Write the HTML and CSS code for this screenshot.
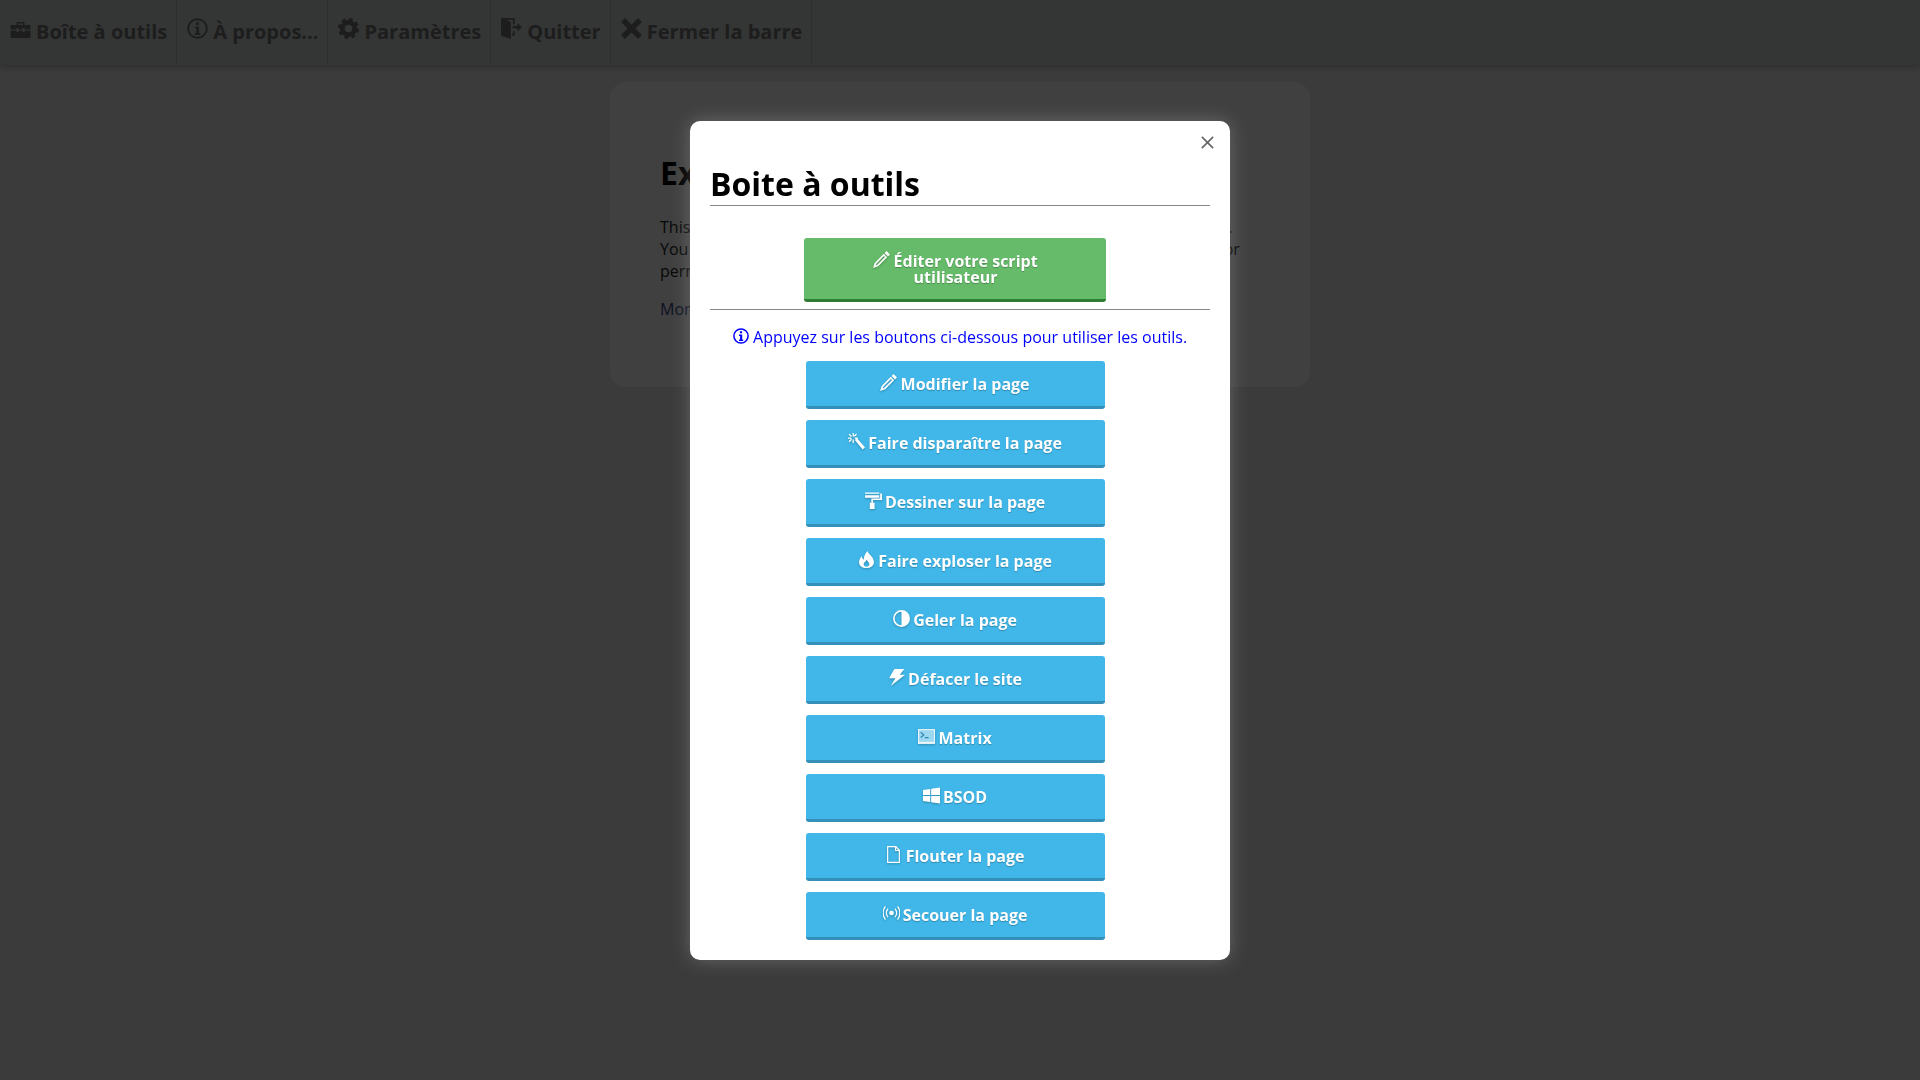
FILE: index.html
```html
<!DOCTYPE html>
<html lang="fr">
<head>
<meta charset="utf-8">
<title>Boite à outils</title>
<link rel="stylesheet" href="styles.css">
</head>
<body>
<svg class="defs" aria-hidden="true">
  <symbol id="i-case" viewBox="0 0 20 16"><path d="M6 3V1.200C6 .5 6.500 0 7.200 0h5.600C13.500 0 14 .5 14 1.200V3h-1.400V1.400H7.400V3zM1 3h18c.6 0 1 .4 1 1v3.500h-6V6h-2v1.500H8V6H6v1.500H0V4c0-.6.4-1 1-1zM0 8.600h6V10h2V8.600h4V10h2V8.600h6V15c0 .6-.4 1-1 1H1c-.6 0-1-.4-1-1z" fill="currentColor"/></symbol>
  <symbol id="i-info" viewBox="0 0 16 16"><circle cx="8" cy="8" r="7.100" fill="none" stroke="currentColor" stroke-width="1.500"/><path d="M6.900 3.200h2.200v2.100H6.900zM6 6.500h3.200v5h1v1.400H6v-1.400h1.100V7.900H6z" fill="currentColor"/></symbol>
  <symbol id="i-cog" viewBox="0 0 16 16"><circle cx="8" cy="8" r="4.700" fill="none" stroke="currentColor" stroke-width="3.600"/><circle cx="8" cy="8" r="6.900" fill="none" stroke="currentColor" stroke-width="2.200" stroke-dasharray="3 2.420"/></symbol>
  <symbol id="i-door" viewBox="0 0 16 16"><path d="M0 0h10.500v5H9.100V1.400H4.500L7.500 3v13L0 13.500zM9.100 10h1.400v3.500H8.500v-1.300h.6zM8.800 6h3.700V3.800L16 7l-3.500 3.200V8H8.800z" fill="currentColor"/></symbol>
  <symbol id="i-x" viewBox="0 0 16 16"><path d="M3 0l5 5 5-5 3 3-5 5 5 5-3 3-5-5-5 5-3-3 5-5-5-5z" fill="currentColor"/></symbol>
  <symbol id="i-pencil" viewBox="0 0 16 16"><path fill-rule="evenodd" d="M12.800 0L16 3.200l-1.900 1.900-3.200-3.200zM10.100 2.700l3.200 3.200L4.800 14.400 0 16l1.600-4.800zM3.300 11.700L2.200 13.800l2.100-1.100 7-7-1-1z" fill="currentColor"/></symbol>
  <symbol id="i-wand" viewBox="0 0 16 16"><path d="M6.500 6.500l1.700-1.700L16 13.300 13.800 15.500zM4.300 0h1.200v3.300H4.300zM4.300 6h1.200v3.500H4.300zM0 4.200h3.300v1.200H0zM6.300 4.200h3v1.200h-3zM.6 1.500l.9-.9 2.200 2.200-.9.9zM7.600.5l.9.9-2.200 2.200-.9-.9zM.6 7.700l2.200-2.200.9.9-2.200 2.200z" fill="currentColor"/></symbol>
  <symbol id="i-roller" viewBox="0 0 16 16"><path d="M0 .5h13.500v1.200H0zM0 3h13.500v2.500H0zM14.300 1.500H16v6H7.500V10H9v6H4.500v-6H6V6h8.300z" fill="currentColor"/></symbol>
  <symbol id="i-fire" viewBox="0 0 16 16"><path fill-rule="evenodd" d="M9 0c.5 3 6 5.500 6 10.300C15 13.800 12 16 8 16s-7-2.200-7-5.500c0-2.500 1.300-4.300 2.800-5.500 0 1.500.4 2.600 1.600 3.300C5.500 5.500 6.500 2.500 9 0zM8 14.900c1.500 0 2.700-1 2.700-2.400 0-1.800-1.700-2.600-2.500-4.200-.8 1.700-2.900 2.400-2.900 4.200 0 1.400 1.200 2.400 2.700 2.400z" fill="currentColor"/></symbol>
  <symbol id="i-half" viewBox="0 0 16 16"><circle cx="8" cy="8" r="7.200" fill="none" stroke="currentColor" stroke-width="1.500"/><path d="M8 1a7 7 0 0 1 0 14z" fill="currentColor"/></symbol>
  <symbol id="i-flash" viewBox="0 0 16 16"><path d="M6 0h9.500L11 5.500h5L2.500 16 7 8.700H1z" fill="currentColor"/></symbol>
  <symbol id="i-term" viewBox="0 0 16 16"><rect x="0" y="1" width="16" height="14" fill="currentColor" opacity=".9"/><rect x="1" y="2" width="14" height="11" fill="#3fb6e8" opacity=".45"/><path d="M2.500 4l3 2.500-3 2.500M6.500 9H10" fill="none" stroke="#2f86b0" stroke-width="1.100"/></symbol>
  <symbol id="i-win" viewBox="0 0 16 16"><path d="M0 2.800l6.800-1v5.700H0zM7.700 1.600L16 .4v7.100H7.700zM0 8.500h6.800v5.700L0 13.200zM7.700 8.500H16v7.100l-8.300-1.200z" fill="currentColor"/></symbol>
  <symbol id="i-file" viewBox="0 0 16 16"><path d="M2.500.6h7.700l3.300 3.400v11.400h-11zM10 .6v3.600h3.500" fill="none" stroke="currentColor" stroke-width="1.100"/></symbol>
  <symbol id="i-signal" viewBox="0 0 16 16"><circle cx="8" cy="7.500" r="2.200" fill="currentColor"/><path d="M4.700 3.500a6.500 6.500 0 0 0 0 8M11.300 3.500a6.500 6.500 0 0 1 0 8M2.300 1.300a10 10 0 0 0 0 12.400M13.700 1.300a10 10 0 0 1 0 12.400" fill="none" stroke="currentColor" stroke-width="1.100"/></symbol>
</svg>

<nav class="bar">
  <a class="bar-item"><svg class="bar-ic bar-ic-wide"><use href="#i-case"/></svg> Boîte à outils</a>
  <a class="bar-item"><svg class="bar-ic"><use href="#i-info"/></svg> À propos...</a>
  <a class="bar-item"><svg class="bar-ic"><use href="#i-cog"/></svg> Paramètres</a>
  <a class="bar-item"><svg class="bar-ic"><use href="#i-door"/></svg> Quitter</a>
  <a class="bar-item"><svg class="bar-ic"><use href="#i-x"/></svg> Fermer la barre</a>
</nav>

<main class="card">
  <h1 class="card-title">Example Domain</h1>
  <p class="card-text">This domain is established to be used for illustrative examples in documents. You may use this domain in examples without prior coordination or asking for permission.</p>
  <p class="card-text card-link">More information...</p>
</main>

<div class="overlay">
  <section class="modal">
    <svg class="close" viewBox="0 0 12 12"><path d="M.8.8l10.400 10.400M11.200.8L.8 11.200" fill="none" stroke="currentColor" stroke-width="1.500"/></svg>
    <h2 class="modal-title">Boite à outils</h2>
    <div class="stack stack-edit">
      <button class="btn btn-green"><svg class="ic"><use href="#i-pencil"/></svg> Éditer votre script utilisateur</button>
    </div>
    <p class="hint"><svg class="ic"><use href="#i-info"/></svg> Appuyez sur les boutons ci-dessous pour utiliser les outils.</p>
    <div class="stack">
      <button class="btn"><svg class="ic"><use href="#i-pencil"/></svg> Modifier la page</button>
      <button class="btn"><svg class="ic"><use href="#i-wand"/></svg> Faire disparaître la page</button>
      <button class="btn"><svg class="ic"><use href="#i-roller"/></svg> Dessiner sur la page</button>
      <button class="btn"><svg class="ic"><use href="#i-fire"/></svg> Faire exploser la page</button>
      <button class="btn"><svg class="ic"><use href="#i-half"/></svg> Geler la page</button>
      <button class="btn"><svg class="ic"><use href="#i-flash"/></svg> Défacer le site</button>
      <button class="btn"><svg class="ic"><use href="#i-term"/></svg> Matrix</button>
      <button class="btn"><svg class="ic"><use href="#i-win"/></svg> BSOD</button>
      <button class="btn"><svg class="ic"><use href="#i-file"/></svg> Flouter la page</button>
      <button class="btn"><svg class="ic"><use href="#i-signal"/></svg> Secouer la page</button>
    </div>
  </section>
</div>
</body>
</html>
```

FILE: styles.css
```css
* { box-sizing: border-box; }
html, body { height: 100%; }
body {
  margin: 0;
  background: #ebebed;
  font-family: "Open Sans", "Liberation Sans", sans-serif;
  font-size: 16px;
  color: #000;
  overflow: hidden;
}
.defs { display: none; }

.bar {
  display: flex;
  height: 65px;
  background: #ced4d1;
  box-shadow: 0 2px 6px rgba(0, 0, 0, .25);
}
.bar-item {
  display: flex;
  align-items: center;
  gap: 6px;
  height: 64px;
  padding: 0 9px 2px 10px;
  border-right: 1px solid #b4b8b6;
  font-size: 20px;
  font-weight: 700;
  color: #747474;
  white-space: nowrap;
}
.bar-ic { width: 21px; height: 21px; margin: -5px -1px 0 0; }
.bar-ic-wide { height: 16px; margin-top: -3px; }

.card {
  width: 700px;
  height: 305px;
  margin: 17px auto 0;
  padding: 50px;
  background: #fdfdff;
  border-radius: 16px;
}
.card-title {
  margin: 0 0 20px;
  font-size: 32px;
  line-height: 44px;
  font-weight: 700;
  padding-top: 19px;
}
.card-text {
  margin: 0 0 16px;
  line-height: 22px;
  color: #222;
}
.card-title + .card-text { margin-top: 21px; }
.card-link { color: #38488f; margin-bottom: 0; }

.overlay {
  position: fixed;
  inset: 0;
  padding-top: 121px;
  background: rgba(0, 0, 0, .75);
}
.modal {
  position: relative;
  width: 540px;
  height: 839px;
  margin: 0 auto;
  padding: 43px 20px 20px;
  background: #fff;
  border-radius: 10px;
  box-shadow: 0 0 18px rgba(255, 255, 255, .22);
}
.close {
  position: absolute;
  top: 15px;
  right: 16px;
  width: 13px;
  height: 13px;
  color: #666;
}
.modal-title {
  margin: 0;
  height: 42px;
  font-size: 32px;
  line-height: 40px;
  font-weight: 700;
  border-bottom: 1px solid #888;
}
.stack {
  display: flex;
  flex-direction: column;
  align-items: center;
  gap: 11px;
  padding-right: 10px;
}
.stack-edit {
  margin-top: 32px;
  padding-bottom: 7px;
  border-bottom: 1px solid #888;
  padding-right: 11px;
}
.btn {
  display: block;
  width: 299px;
  height: 48px;
  padding: 0 10px;
  border: 0;
  border-bottom: 3px solid #3490b8;
  border-radius: 3px;
  background: #40b7e8;
  color: #fff;
  font: 700 16px/22px "Open Sans", "Liberation Sans", sans-serif;
  text-shadow: 0 1px 1px rgba(0, 0, 0, .25);
}
.btn-green {
  width: 302px;
  height: 64px;
  padding: 0 39px 2px 41px;
  border-bottom-color: #2e7d32;
  background: #66bb6a;
  line-height: 16px;
}
.ic {
  display: inline-block;
  width: 16px;
  height: 16px;
  vertical-align: -1px;
  color: inherit;
}
.btn .ic {
  width: 17px;
  height: 17px;
  margin-right: -1px;
  filter: drop-shadow(0 1px 1px rgba(0, 0, 0, .25));
}
.hint {
  margin: 16px 0 13px;
  text-align: center;
  line-height: 22px;
  color: #0000ff;
}
```
